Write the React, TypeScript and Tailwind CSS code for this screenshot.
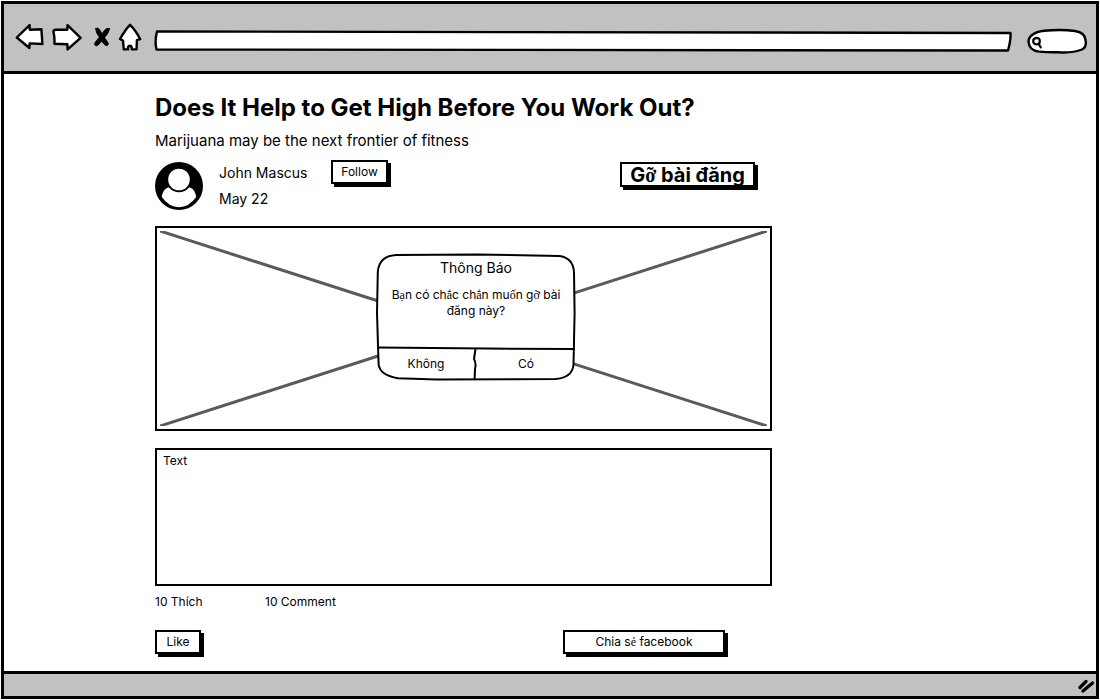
import type { ReactNode } from "react";

const ink = { stroke: "#000", strokeWidth: 2.4, strokeLinejoin: "round", strokeLinecap: "round" } as const;

function Serif({ children }: { children: ReactNode }) {
  return <span className="font-['Liberation_Serif',serif]">{children}</span>;
}

function ShadowButton({ className, children }: { className: string; children: ReactNode }) {
  return (
    <button
      type="button"
      className={`flex items-center justify-center border-2 border-black bg-white shadow-[3px_3px_0_0_#000] ${className}`}
    >
      {children}
    </button>
  );
}

function Toolbar() {
  return (
    <header className="flex h-[70px] items-center border-b-3 border-black bg-[#c1c1c1] pr-2 pl-[11px]">
      <nav aria-label="Browser" className="flex items-center pb-0.5">
        <button type="button" aria-label="Back" className="w-[30px]">
          <svg width="30" height="30" viewBox="0 0 30 30" fill="#fff" {...ink}>
            <path d="M1.8 15.5L14.6 3.2L14.8 7.8L26.4 7.2L27.4 22L14.6 21.4L14.4 26Z" />
          </svg>
        </button>
        <button type="button" aria-label="Forward" className="ml-[7px] w-[30px]">
          <svg width="30" height="30" viewBox="0 0 30 30" fill="#fff" {...ink}>
            <path d="M1.4 9.5Q1.5 7.8 4 7.7L15.3 7.8L15.5 3.2L28.6 15.8L15.6 27.4L15.4 22.3L2.4 21.8Q2.8 15 1.4 9.5Z" />
          </svg>
        </button>
        <button type="button" aria-label="Stop" className="ml-2 w-[24px]">
          <svg width="24" height="30" viewBox="0 0 24 30" fill="#000" stroke="#000" strokeLinecap="round" strokeLinejoin="round">
            <path d="M5.8 6.4Q8 5 9.5 7.6L12.4 12.6L18.4 21.5Q18.2 24.2 15.6 23.4Q12 20.6 9.6 15.4Q5.2 10 5.8 6.4Z" strokeWidth="1" />
            <path d="M19.4 6.6Q16 5 13 10.6L5.2 20.4Q3.6 23.8 6.6 23.8Q9.4 23 11.8 18Q19 12 19.4 6.6Z" strokeWidth="1" />
          </svg>
        </button>
        <button type="button" aria-label="Home" className="ml-1 w-[24px]">
          <svg width="24" height="30" viewBox="0 0 24 30" fill="#fff" {...ink}>
            <path d="M12 2.8Q7 8 2 17L5 18.6L5.8 27.4L10 27.4Q9.4 24 11.8 23.8Q14 24 13.8 27.4L18.6 27.2L18.9 18.2L22.3 17.2Q17.5 8 12 2.8Z" />
          </svg>
        </button>
      </nav>
      <div className="relative mt-1.5 ml-3 h-[22px] min-w-0 flex-1">
        <svg
          className="absolute inset-0 h-full w-full"
          viewBox="0 0 858 22"
          preserveAspectRatio="none"
          fill="#fff"
          {...ink}
          aria-hidden="true"
        >
          <path d="M3 1.5L856.5 3Q857 10 854 20.5L2.5 19.5Q0.5 11 3 1.5Z" vectorEffect="non-scaling-stroke" />
        </svg>
        <input aria-label="Address" className="relative block h-full w-full bg-transparent px-2 text-sm outline-none" />
      </div>
      <label className="relative mt-1.5 ml-3.5 block h-[26px] w-[62px]">
        <svg className="absolute inset-0" width="62" height="26" viewBox="0 0 62 26" fill="#fff" {...ink}>
          <path d="M2.5 13.5Q3 5 18 2.8Q35 1 49 3Q59 4.5 59.5 12Q61 19 56 21.5Q46 25.4 32 24.2Q24 24.6 13 23.6Q3 22.5 2.5 13.5Z" />
          <g fill="none" strokeWidth="2.2">
            <path d="M13.8 13.2Q14 10 10.6 9.8Q7 10.2 7.2 13.2Q7.4 16.3 10.4 16.3Q13.6 16.2 13.8 13.2L13.2 17L14.8 19.4" />
          </g>
        </svg>
        <input aria-label="Search" className="relative ml-5 h-full w-8 bg-transparent text-xs outline-none" />
      </label>
    </header>
  );
}

function Avatar() {
  return (
    <svg width="48" height="48" viewBox="0 0 48 48" role="img" aria-label="John Mascus">
      <circle cx="24" cy="24" r="24" />
      <path d="M6.8 35C7.5 28.5 11.5 25 15.5 25Q24 33.5 32.5 25C36.5 25 40.5 28.5 41.2 35Q34 45.2 24 45.2Q14 45.2 6.8 35Z" fill="#fff" />
      <circle cx="24" cy="17.5" r="11.8" fill="#fff" stroke="#000" strokeWidth="2" />
    </svg>
  );
}

function ConfirmDialog() {
  return (
    <div
      role="dialog"
      aria-labelledby="confirm-title"
      className="absolute top-[25px] left-[219px] flex h-[128px] w-[200px] flex-col text-center"
    >
      <svg className="absolute inset-0" width="200" height="128" viewBox="0 0 200 128" fill="#fff" {...ink} strokeWidth="2" aria-hidden="true">
        <path d="M1.8 19Q3 3 20 2L100 1.4L183 3Q197 4.5 198 19L198.6 60L197.5 112Q196 125 179 126L60 126.6L22 125.2Q3.5 122 2.6 111L1 60Z" />
        <path d="M2 94.5L110 95.6L198 96M99.5 96L98 106Q100.5 110 99 116L98.6 126" fill="none" />
      </svg>
      <h2 id="confirm-title" className="relative pt-1 text-sm leading-[22px]">
        Thông Báo
      </h2>
      <p className="relative mt-1.5 flex-1 pt-0.5 text-xs leading-4">
        B<Serif>ạ</Serif>n có ch<Serif>ắ</Serif>c ch<Serif>ắ</Serif>n mu<Serif>ố</Serif>n g<Serif>ỡ</Serif> bài
        <br />
        đăng này?
      </p>
      <div className="relative grid h-8 grid-cols-2 pb-0.5 text-xs">
        <button type="button">Không</button>
        <button type="button">Có</button>
      </div>
    </div>
  );
}

function Article() {
  return (
    <article className="w-full max-w-[617px]">
      <h1 className="text-2xl leading-8 font-bold whitespace-nowrap">Does It Help to Get High Before You Work Out?</h1>
      <p className="mt-[5px] text-[15px] leading-6">Marijuana may be the next frontier of fitness</p>

      <div className="mt-[7px] flex items-start">
        <div className="mt-0.5">
          <Avatar />
        </div>
        <div className="ml-4 w-28 text-sm leading-[26px]">
          <p>John Mascus</p>
          <p>May 22</p>
        </div>
        <ShadowButton className="h-[24px] w-[57px] text-xs">Follow</ShadowButton>
        <ShadowButton className="mt-0.5 mr-[17px] ml-auto h-[25px] w-[135px] text-xl font-bold">
          <span>
            G<Serif>ỡ</Serif> bài đăng
          </span>
        </ShadowButton>
      </div>

      <div className="relative mt-[14px] h-[205px] border-2 border-black p-[3px]">
        <svg width="100%" height="100%" viewBox="0 0 100 100" preserveAspectRatio="none" stroke="#5a5a5a" strokeWidth="3">
          <path d="M0 0L100 100M0 100L100 0" vectorEffect="non-scaling-stroke" />
        </svg>
        <ConfirmDialog />
      </div>

      <textarea
        aria-label="Text"
        defaultValue="Text"
        className="mt-[17px] block h-[138px] w-full resize-none border-2 border-black bg-white px-1.5 py-[3px] text-xs leading-4 outline-none"
      />

      <div className="mt-2 flex text-xs leading-4">
        <p className="w-[110px]">10 Thích</p>
        <p>10 Comment</p>
      </div>

      <div className="mt-5 flex justify-between pr-[47px] pb-3">
        <ShadowButton className="h-[24px] w-[46px] text-xs">Like</ShadowButton>
        <ShadowButton className="h-[24px] w-[162px] text-xs">
          <span>
            Chia s<Serif>ẻ</Serif> facebook
          </span>
        </ShadowButton>
      </div>
    </article>
  );
}

export default function App() {
  return (
    <div className="min-h-screen bg-white p-px font-['Inter',sans-serif] text-black">
      <div className="flex min-h-[calc(100vh-2px)] flex-col border-3 border-black">
        <Toolbar />
        <main className="flex-1 pt-[18px] pr-4 pl-[151px]">
          <Article />
        </main>
        <footer className="flex h-[25px] items-center justify-end border-t-3 border-black bg-[#c1c1c1]">
          <svg width="18" height="16" viewBox="0 0 18 16" fill="none" stroke="#000" strokeWidth="3.2" strokeLinecap="round">
            <path d="M2 10.5L8 4.5M5 14L14.5 6" />
          </svg>
        </footer>
      </div>
    </div>
  );
}
